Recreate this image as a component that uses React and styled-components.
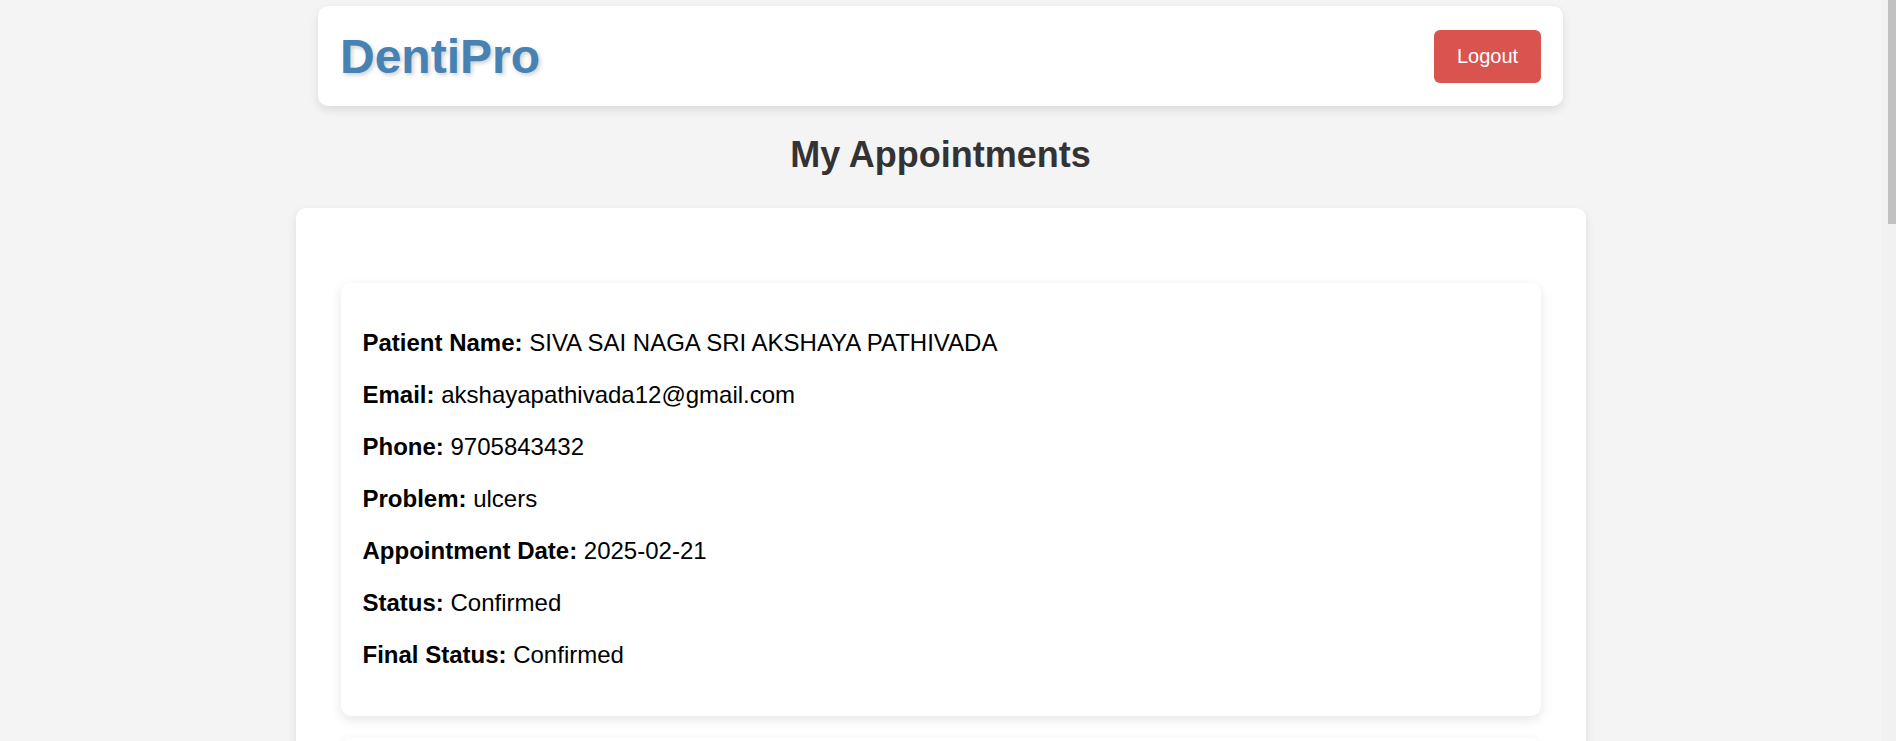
import React from 'react';
import styled, { createGlobalStyle } from 'styled-components';

const GlobalStyle = createGlobalStyle`
    html, body {
        margin: 0;
        padding: 0;
        background: #f4f4f4;
        font-family: "Liberation Sans", Arial, sans-serif;
    }
`;

const appointments = [
    {
        id: 1,
        name: 'SIVA SAI NAGA SRI AKSHAYA PATHIVADA',
        email: 'akshayapathivada12@gmail.com',
        phone: '9705843432',
        problem: 'ulcers',
        date: '2025-02-21',
        status: 'Confirmed',
        finalStatus: 'Confirmed',
    },
    {
        id: 2,
        name: 'SIVA SAI NAGA SRI AKSHAYA PATHIVADA',
        email: 'akshayapathivada12@gmail.com',
        phone: '9705843432',
        problem: 'tooth pain',
        date: '2025-02-24',
        status: 'Pending',
        finalStatus: 'Pending',
    },
    {
        id: 3,
        name: 'SIVA SAI NAGA SRI AKSHAYA PATHIVADA',
        email: 'akshayapathivada12@gmail.com',
        phone: '9705843432',
        problem: 'cleaning',
        date: '2025-03-02',
        status: 'Confirmed',
        finalStatus: 'Completed',
    },
    {
        id: 4,
        name: 'SIVA SAI NAGA SRI AKSHAYA PATHIVADA',
        email: 'akshayapathivada12@gmail.com',
        phone: '9705843432',
        problem: 'cavity',
        date: '2025-03-10',
        status: 'Pending',
        finalStatus: 'Pending',
    },
];

const App = () => {
    return (
        <>
            <GlobalStyle />
            <Page>
                <Header>
                    <Logo>DentiPro</Logo>
                    <LogoutButton>Logout</LogoutButton>
                </Header>

                <Title>My Appointments</Title>

                <Container>
                    {
                        appointments.map((a) => {
                            return (
                                <AppointmentCard key={a.id}>
                                    <Field><strong>Patient Name:</strong> {a.name}</Field>
                                    <Field><strong>Email:</strong> {a.email}</Field>
                                    <Field><strong>Phone:</strong> {a.phone}</Field>
                                    <Field><strong>Problem:</strong> {a.problem}</Field>
                                    <Field><strong>Appointment Date:</strong> {a.date}</Field>
                                    <Field><strong>Status:</strong> {a.status}</Field>
                                    <Field><strong>Final Status:</strong> {a.finalStatus}</Field>
                                </AppointmentCard>
                            )
                        })
                    }
                </Container>
            </Page>

            {/* scrollbar of the window */}
            <ScrollTrack>
                <ScrollThumb />
            </ScrollTrack>
        </>
    )
}

const Page = styled.div`
    width: calc(100% - 15px);
    padding: 6px 0 40px;
`;

const Header = styled.header`
    width: 1245px;
    height: 100px;
    margin: 0 auto;
    box-sizing: border-box;
    padding: 0 22px;
    display: flex;
    justify-content: space-between;
    align-items: center;
    background: #fff;
    border-radius: 10px;
    box-shadow: 0 4px 10px rgba(0, 0, 0, 0.1);
`;

const Logo = styled.h1`
    margin: 0;
    font-size: 48px;
    font-weight: bold;
    color: #4682b4;
    text-shadow: 2px 2px 4px rgba(0, 0, 0, 0.2);
`;

const LogoutButton = styled.button`
    width: 107px;
    height: 53px;
    border: none;
    border-radius: 6px;
    background: #d9534f;
    color: #fff;
    font-family: "Liberation Sans", Arial, sans-serif;
    font-size: 20px;
    cursor: pointer;
`;

const Title = styled.h2`
    margin: 29px 0 33px;
    text-align: center;
    font-size: 36px;
    line-height: 40px;
    color: #333;
`;

const Container = styled.main`
    width: 1290px;
    margin: 0 auto;
    box-sizing: border-box;
    padding: 75px 45px 1px;
    background: #fff;
    border-radius: 10px;
    box-shadow: 0 4px 10px rgba(0, 0, 0, 0.1);
`;

const AppointmentCard = styled.div`
    padding: 22px 22px 24px;
    margin-bottom: 22px;
    background: #fff;
    border-radius: 10px;
    box-shadow: 0 4px 12px rgba(0, 0, 0, 0.1);
`;

const Field = styled.p`
    margin: 23px 0;
    font-size: 24px;
    line-height: 29px;
    color: #000;

    strong {
        font-weight: bold;
    }
`;

const ScrollTrack = styled.div`
    position: fixed;
    top: 0;
    right: 0;
    width: 15px;
    height: 100vh;
    background: #f1f1f1;
    display: flex;
    justify-content: flex-end;
`;

const ScrollThumb = styled.div`
    width: 8px;
    height: 224px;
    background: #c1c1c1;
`;

export default App;
